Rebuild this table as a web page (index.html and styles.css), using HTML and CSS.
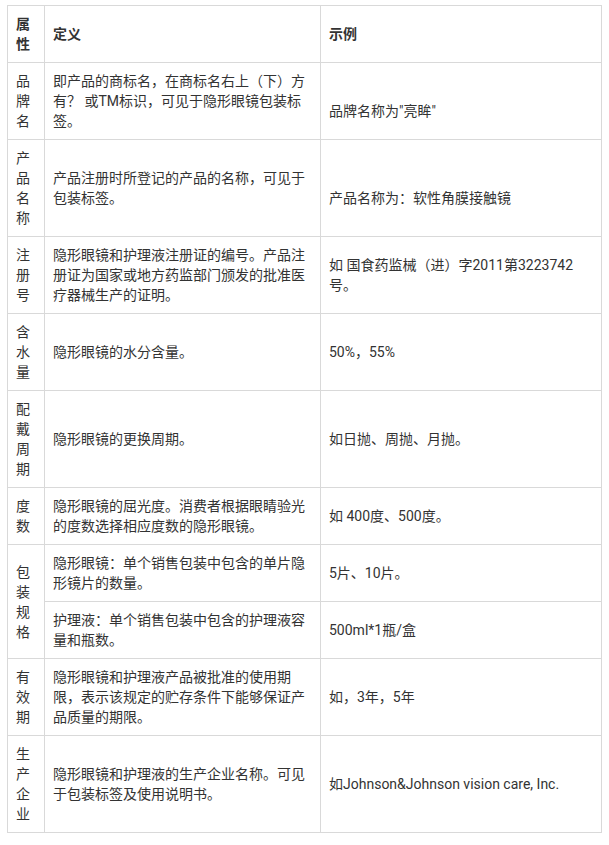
FILE: index.html
```html
<!DOCTYPE html>
<html lang="zh-CN">
<head>
<meta charset="utf-8">
<title>隐形眼镜属性</title>
<link rel="stylesheet" href="styles.css">
</head>
<body>
<table class="spec">
  <colgroup>
    <col class="c-attr">
    <col class="c-def">
    <col class="c-ex">
  </colgroup>
  <thead>
    <tr>
      <th>属性</th>
      <th>定义</th>
      <th>示例</th>
    </tr>
  </thead>
  <tbody>
    <tr>
      <td>品牌名</td>
      <td>即产品的商标名，在商标名右上（下）方有？ 或TM标识，可见于隐形眼镜包装标签。</td>
      <td><br>品牌名称为"亮眸"</td>
    </tr>
    <tr>
      <td>产品名称</td>
      <td>产品注册时所登记的产品的名称，可见于包装标签。</td>
      <td><br>产品名称为：软性角膜接触镜</td>
    </tr>
    <tr>
      <td>注册号</td>
      <td>隐形眼镜和护理液注册证的编号。产品注册证为国家或地方药监部门颁发的批准医疗器械生产的证明。</td>
      <td>如 国食药监械（进）字2011第3223742号。</td>
    </tr>
    <tr>
      <td>含水量</td>
      <td>隐形眼镜的水分含量。</td>
      <td>50%，55%</td>
    </tr>
    <tr>
      <td>配戴周期</td>
      <td>隐形眼镜的更换周期。</td>
      <td>如日抛、周抛、月抛。</td>
    </tr>
    <tr>
      <td>度数</td>
      <td>隐形眼镜的屈光度。消费者根据眼睛验光的度数选择相应度数的隐形眼镜。</td>
      <td>如 400度、500度。</td>
    </tr>
    <tr>
      <td rowspan="2">包装规格</td>
      <td>隐形眼镜：单个销售包装中包含的单片隐形镜片的数量。</td>
      <td>5片、10片。</td>
    </tr>
    <tr>
      <td>护理液：单个销售包装中包含的护理液容量和瓶数。</td>
      <td>500ml*1瓶/盒</td>
    </tr>
    <tr>
      <td>有效期</td>
      <td>隐形眼镜和护理液产品被批准的使用期限，表示该规定的贮存条件下能够保证产品质量的期限。</td>
      <td>如，3年，5年</td>
    </tr>
    <tr>
      <td>生产企业</td>
      <td>隐形眼镜和护理液的生产企业名称。可见于包装标签及使用说明书。</td>
      <td>如Johnson&amp;Johnson vision care, Inc.</td>
    </tr>
  </tbody>
</table>
</body>
</html>
```

FILE: styles.css
```css
html, body {
  margin: 0;
  padding: 0;
  background: #ffffff;
}

body {
  padding: 5px 0 0 7px;
  font-family: Roboto, "Noto Sans CJK SC", sans-serif;
  font-size: 14px;
  line-height: 20px;
  color: #333333;
}

.spec {
  border-collapse: collapse;
  table-layout: fixed;
  width: 594px;
}

.c-attr { width: 37px; }
.c-def { width: 276px; }
.c-ex { width: 281px; }

.spec th,
.spec td {
  border: 1px solid #d9d9d9;
  padding: 8px 8px;
  vertical-align: middle;
  text-align: left;
  word-break: normal;
}

.spec th {
  font-weight: bold;
}
```
